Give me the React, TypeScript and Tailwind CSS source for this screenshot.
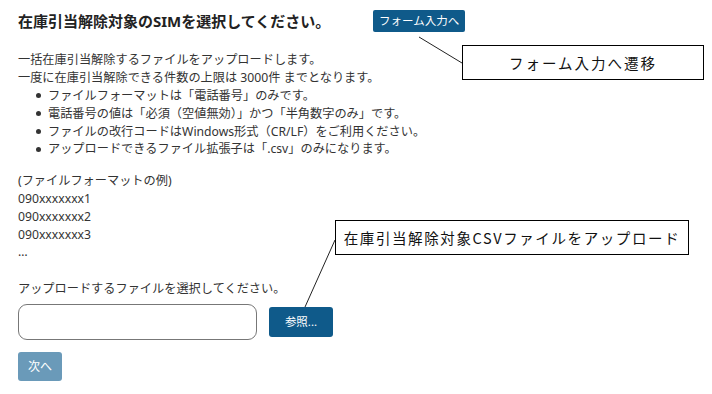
import React from 'react';

const bullets = [
  'ファイルフォーマットは「電話番号」のみです。',
  '電話番号の値は「必須（空値無効）」かつ「半角数字のみ」です。',
  'ファイルの改行コードはWindows形式（CR/LF）をご利用ください。',
  'アップロードできるファイル拡張子は「.csv」のみになります。',
];

const examples = ['(ファイルフォーマットの例)', '090xxxxxxx1', '090xxxxxxx2', '090xxxxxxx3', '…'];

export default function App() {
  return (
    <div
      className="relative w-[712px] h-[394px] bg-white overflow-hidden text-[#333333]"
      style={{ fontFamily: '"Noto Sans", "Noto Sans CJK JP", sans-serif' }}
    >
      <div className="pl-[18px] pt-[10px]">
        {/* title row */}
        <div className="flex items-center h-[22px]">
          <h1 className="w-[355px] text-[15px] font-bold text-[#222222] leading-[22px]">
            在庫引当解除対象のSIMを選択してください。
          </h1>
          <button className="h-[22px] px-[6px] rounded-[2px] bg-[#0f5a8a] text-white text-[11.5px] leading-[22px]">
            フォーム入力へ
          </button>
        </div>

        <div className="mt-[19px] text-[12.2px] leading-[17.8px]">
          <p>一括在庫引当解除するファイルをアップロードします。</p>
          <p>一度に在庫引当解除できる件数の上限は 3000件 までとなります。</p>
          <ul className="mt-[0.5px]">
            {bullets.map(b => (
              <li key={b} className="flex items-center">
                <span className="w-[30px] flex justify-end pr-[7px]">
                  <span className="w-[5px] h-[5px] rounded-full bg-[#333333]" />
                </span>
                <span>{b}</span>
              </li>
            ))}
          </ul>

          <div className="mt-[14px]">
            {examples.map(e => (
              <p key={e}>{e}</p>
            ))}
          </div>

          <p className="mt-[19px]">アップロードするファイルを選択してください。</p>
        </div>

        <div className="flex items-center mt-[6px] gap-[12px]">
          <div className="w-[239px] h-[36px] rounded-[9px] border border-[#777777] bg-white" />
          <button className="w-[64px] h-[30px] rounded-[3px] bg-[#0f5a8a] text-white text-[11.5px]">
            参照...
          </button>
        </div>

        <button className="mt-[12px] w-[44px] h-[29px] rounded-[3px] bg-[#6a9ab9] text-white text-[12px]">
          次へ
        </button>
      </div>

      {/* annotation callouts */}
      <svg className="absolute left-0 top-0 pointer-events-none" width="712" height="394">
        <line x1="419" y1="37" x2="462" y2="63" stroke="#222" strokeWidth="1" />
        <line x1="305" y1="307" x2="335" y2="240" stroke="#222" strokeWidth="1" />
      </svg>
      <div
        className="absolute left-[462px] top-[45px] w-[242px] h-[35px] border border-black bg-white flex items-center justify-center text-[14.5px] tracking-[2px] text-[#111111]"
        style={{ fontFamily: '"Noto Sans CJK JP", sans-serif' }}
      >
        フォーム入力へ遷移
      </div>
      <div
        className="absolute left-[335px] top-[220px] w-[354px] h-[35px] border border-black bg-white flex items-center justify-center text-[14.5px] tracking-[1.6px] text-[#111111]"
        style={{ fontFamily: '"Noto Sans CJK JP", sans-serif' }}
      >
        在庫引当解除対象CSVファイルをアップロード
      </div>
    </div>
  );
}
